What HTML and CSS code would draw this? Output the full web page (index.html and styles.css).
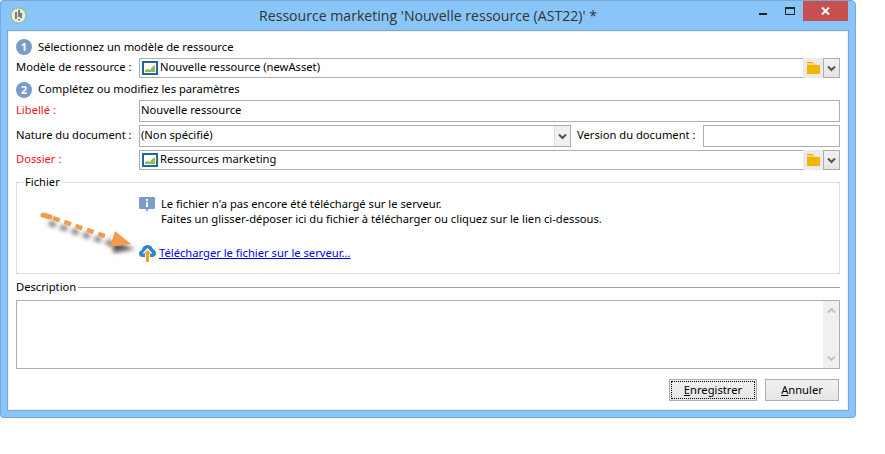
FILE: index.html
```html
<!DOCTYPE html>
<html lang="fr">
<head>
<meta charset="utf-8">
<title>Ressource marketing</title>
<link rel="stylesheet" href="styles.css">
</head>
<body>
<div class="window">
  <header class="titlebar">
    <svg class="app-icon" width="17" height="17" viewBox="0 0 17 17"><circle cx="8.5" cy="8.5" r="7.5" fill="#e9ebe4" stroke="#8fbf5c" stroke-width="1"/><path d="M6 5v7M9 3v7M9 12v1.500M11 6v5" stroke="#555" stroke-width="1.500" fill="none"/></svg>
    <div class="title">Ressource marketing 'Nouvelle ressource (AST22)' *</div>
    <div class="win-controls">
      <span class="win-min"></span>
      <span class="win-max"></span>
      <span class="win-close"><svg width="9" height="8" viewBox="0 0 9 8"><path d="M1 0.500L8 7.500M8 0.500L1 7.500" stroke="#fff" stroke-width="2"/></svg></span>
    </div>
  </header>
  <main class="body">
    <div class="step step-1"><span class="num">1</span><span class="txt">Sélectionnez un modèle de ressource</span></div>
    <div class="row row-link">
      <label class="lbl">Modèle de ressource :</label>
      <div class="field link-field">
        <svg class="res-icon" width="16" height="14" viewBox="0 0 16 14"><rect x="1" y="1" width="14" height="12" fill="#fff" stroke="#1f66a5" stroke-width="2"/><path d="M3 11V9L6 8L8 9L10 6L13 4V11Z" fill="#8cbf4c"/></svg>
        <span class="txt">Nouvelle ressource (newAsset)</span>
      </div>
      <div class="folder-btn"><svg width="13" height="12" viewBox="0 0 13 12"><path d="M0 0H6V1H0Z" fill="#f39a1d"/><path d="M0 1H8V3H13V4H0Z" fill="#f7d67c"/><rect y="3" width="13" height="9" fill="#eeb600"/></svg></div>
      <div class="drop-btn"><svg width="9" height="7" viewBox="0 0 9 7"><path d="M1 1.500L4.500 5L8 1.500" stroke="#555" stroke-width="2" fill="none"/></svg></div>
    </div>
    <div class="step step-2"><span class="num">2</span><span class="txt">Complétez ou modifiez les paramètres</span></div>
    <div class="row row-text">
      <label class="lbl req">Libellé :</label>
      <div class="field"><span class="txt">Nouvelle ressource</span></div>
    </div>
    <div class="row row-text row-nature">
      <label class="lbl">Nature du document :</label>
      <div class="field select-field"><span class="txt">(Non spécifié)</span>
        <div class="select-arrow"><svg width="9" height="7" viewBox="0 0 9 7"><path d="M1 1.500L4.500 5L8 1.500" stroke="#555" stroke-width="2" fill="none"/></svg></div>
      </div>
      <label class="lbl-version">Version du document :</label>
      <div class="field version"></div>
    </div>
    <div class="row row-link row-last">
      <label class="lbl req">Dossier :</label>
      <div class="field link-field">
        <svg class="res-icon" width="16" height="14" viewBox="0 0 16 14"><rect x="1" y="1" width="14" height="12" fill="#fff" stroke="#1f66a5" stroke-width="2"/><path d="M3 11V9L6 8L8 9L10 6L13 4V11Z" fill="#8cbf4c"/></svg>
        <span class="txt">Ressources marketing</span>
      </div>
      <div class="folder-btn"><svg width="13" height="12" viewBox="0 0 13 12"><path d="M0 0H6V1H0Z" fill="#f39a1d"/><path d="M0 1H8V3H13V4H0Z" fill="#f7d67c"/><rect y="3" width="13" height="9" fill="#eeb600"/></svg></div>
      <div class="drop-btn"><svg width="9" height="7" viewBox="0 0 9 7"><path d="M1 1.500L4.500 5L8 1.500" stroke="#555" stroke-width="2" fill="none"/></svg></div>
    </div>
    <section class="file-box">
      <div class="file-legend">Fichier</div>
      <div class="file-msg">
        <svg class="info" width="16" height="15" viewBox="0 0 16 15"><path d="M1 0H15Q16 0 16 1V11Q16 12 15 12H9.500L8 15L6.500 12H1Q0 12 0 11V1Q0 0 1 0Z" fill="#7b9cc9"/><rect x="7" y="2" width="2" height="2" fill="#fff"/><rect x="7" y="5" width="2" height="5" fill="#fff"/></svg>
        <p>Le fichier n'a pas encore été téléchargé sur le serveur.<br>Faites un glisser-déposer ici du fichier à télécharger ou cliquez sur le lien ci-dessous.</p>
      </div>
      <div class="file-link">
        <svg width="17" height="17" viewBox="0 0 17 17"><path d="M3.500 12C1.500 12 0 10.500 0 8.500C0 6.800 1.200 5.500 2.800 5.200C3.300 2.300 5.500 0 8.500 0C11.200 0 13.300 1.800 14 4.300C15.800 4.800 17 6.400 17 8.300C17 10.400 15.400 12 13.500 12Z" fill="#2f86cf"/><path d="M8.500 3L13.500 8.500H11V12H6V8.500H3.500Z" fill="#fff"/><path d="M8.500 5L12 8.800H10V17H7V8.800H5Z" fill="#f59a23"/></svg>
        <a href="#">Télécharger le fichier sur le serveur...</a>
      </div>
      <svg class="arrow" width="100" height="50" viewBox="0 0 100 50">
        <g class="arrow-shadow"><path d="M6 12L72 34" stroke="#777" stroke-width="5" stroke-dasharray="7 5" fill="none"/><path d="M70 30L92 38L70 42Z" fill="#555"/></g>
        <path d="M0 4L7 6" stroke="#f59b4e" stroke-width="5" stroke-linecap="round" fill="none"/>
        <path d="M10 7L67 27" stroke="#f59b4e" stroke-width="4.500" stroke-dasharray="7 5" fill="none"/>
        <path d="M72 20L88 33L67 36Z" fill="#f59b4e"/>
      </svg>
    </section>
    <div class="desc-head"><span class="txt">Description</span><i></i></div>
    <div class="desc-box">
      <div class="scrollbar">
        <svg width="9" height="7" viewBox="0 0 9 7"><path d="M1 5.500L4.500 2L8 5.500" stroke="#c4c4c4" stroke-width="2" fill="none"/></svg>
        <svg width="9" height="7" viewBox="0 0 9 7"><path d="M1 1.500L4.500 5L8 1.500" stroke="#c4c4c4" stroke-width="2" fill="none"/></svg>
      </div>
    </div>
    <footer class="actions">
      <button class="btn btn-save" type="button"><span class="focus"><span class="txt"><u>E</u>nregistrer</span></span></button>
      <button class="btn btn-cancel" type="button"><span class="txt"><u>A</u>nnuler</span></button>
    </footer>
  </main>
</div>
</body>
</html>
```
FILE: styles.css
```css
* { box-sizing: border-box; }
html, body { margin: 0; padding: 0; background: #fff; }
body { width: 885px; height: 454px; font-family: "Noto Sans", "DejaVu Sans", sans-serif; font-size: 11.2px; color: #000; overflow: hidden; }
.window { width: 856px; height: 418px; background: #8ac5fa; border: 1px solid #7ba7d3; border-radius: 3px 5px 3px 3px; padding: 0 7px 7px 7px; display: flex; flex-direction: column; }
.titlebar { height: 30px; flex: none; display: flex; align-items: flex-start; position: relative; }
.app-icon { margin: 6px 0 0 2px; }
.title { position: absolute; left: 0; right: 0; top: 5px; text-align: center; font-size: 14.1px; line-height: 20px; color: #333; font-family: "Open Sans", "Noto Sans", sans-serif; }
.win-controls { margin-left: auto; display: flex; align-items: flex-start; position: relative; }
.win-min { width: 8px; height: 2px; background: #222; margin: 12px 18px 0 0; }
.win-max { width: 10px; height: 8px; border: 1px solid #222; border-top-width: 2px; margin: 6px 8px 0 0; }
.win-close { width: 45px; height: 20px; background: #c75050; display: flex; align-items: center; justify-content: center; }
.body { flex: 1; background: #fff; border: 1px solid #f2f2f2; outline: 1px solid #6fa9de; padding: 0 7px; display: flex; flex-direction: column; }
.txt { display: block; padding-bottom: 2px; }
.row .txt, .row .lbl, .row .lbl-version { padding-bottom: 4px; }
.file-legend { padding-bottom: 2px; }
.step { height: 20px; margin-top: 6px; display: flex; align-items: center; gap: 6px; line-height: 16px; }
.step-1 .num { margin-bottom: 2px; }
.step-2 { margin-top: 1px; height: 21px; }
.num { width: 16px; height: 16px; border-radius: 50%; background: #7a9bc9; color: #fff; font-weight: 700; font-size: 11px; display: flex; align-items: center; justify-content: center; flex: none; }
.row { display: flex; align-items: center; }
.row-link { height: 20px; }
.row-text { height: 22px; margin-bottom: 3px; }
.row-last { margin-bottom: 12px; }
.lbl { width: 123px; flex: none; }
.req { color: #f50f1c; }
.field { height: 100%; border: 1px solid #adadad; flex: 1; display: flex; align-items: center; padding-left: 1px; min-width: 0; position: relative; }
.link-field { gap: 2px; border-right: 0; padding-left: 2px; }
.res-icon { flex: none; }
.select-field { flex: none; width: 432px; padding-left: 1px; }
.select-arrow { position: absolute; right: 0; top: 0; bottom: 0; width: 16px; background: #f0f0f0; border-left: 1px solid #ddd; display: flex; align-items: center; justify-content: center; }
.lbl-version { flex: none; width: 132px; padding-left: 6px; }
.version { flex: 1; }
.folder-btn { width: 20px; height: 100%; flex: none; background: #eaeaea; display: flex; align-items: center; justify-content: center; }
.drop-btn { width: 17px; height: 100%; flex: none; background: linear-gradient(#f2f2f2, #e4e4e4); border: 1px solid #adadad; display: flex; align-items: center; justify-content: center; }
.file-box { height: 92px; border: 1px solid #dcdcdc; position: relative; flex: none; }
.file-legend { position: absolute; left: 7px; top: -9px; background: #fff; padding: 0 2px 2px 1px; line-height: 16px; }
.file-msg { display: flex; align-items: flex-start; gap: 6px; margin: 13px 0 0 122px; }
.info { flex: none; margin-top: 1px; }
.file-msg p { margin: 0; line-height: 15px; }
.file-link { display: flex; align-items: center; gap: 3px; margin: 19px 0 0 122px; }
.file-link a { color: #0000ee; display: block; padding-bottom: 2px; }
.arrow { position: absolute; left: 26px; top: 28px; overflow: visible; }
.arrow-shadow { filter: blur(2px); }
.desc-head { display: flex; align-items: center; gap: 2px; height: 16px; margin-top: 5px; }
.desc-head i { flex: 1; height: 1px; background: #a0a0a0; }
.desc-box { height: 69px; margin-top: 5px; border: 1px solid #adadad; display: flex; justify-content: flex-end; flex: none; }
.scrollbar { width: 16px; background: #f0f0f0; display: flex; flex-direction: column; align-items: center; justify-content: space-between; padding: 6px 0; }
.actions { display: flex; justify-content: flex-end; gap: 8px; margin-top: 10px; padding-right: 1px; }
.btn { height: 22px; font: inherit; color: #000; border: 1px solid #adadad; background: linear-gradient(#f2f2f2, #e5e5e5); padding: 0; display: flex; align-items: center; justify-content: center; }
.btn-save { width: 88px; padding: 1px; }
.btn-cancel { width: 74px; }
.focus { flex: 1; height: 100%; display: flex; align-items: center; justify-content: center; outline: 1px dotted #000; outline-offset: -1px; }
```
